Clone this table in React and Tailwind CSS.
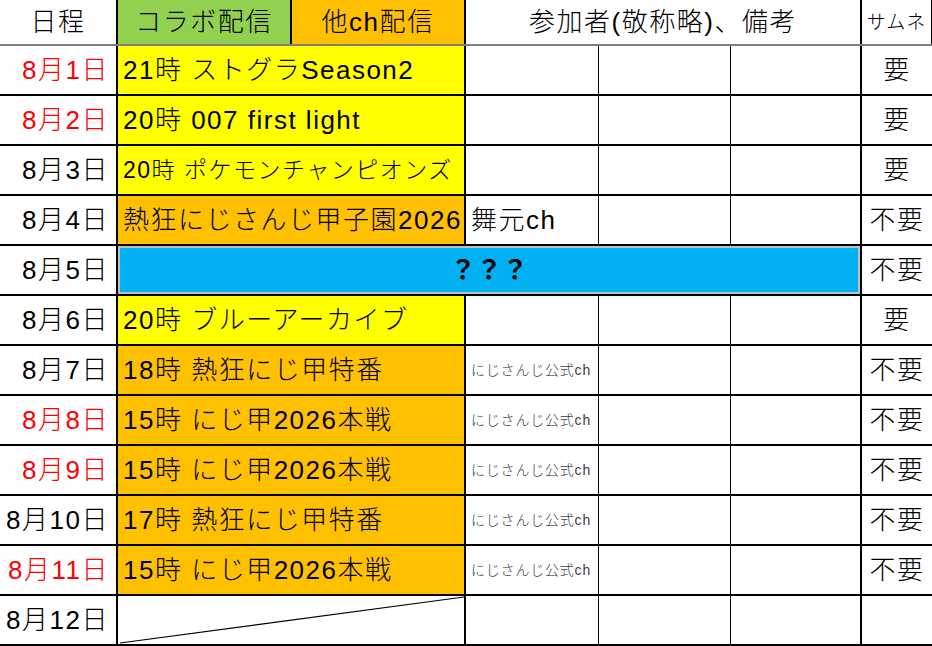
const rows = [
  { date: "8月1日", red: true, title: "21時 ストグラSeason2", bg: "bg-[#ffff00]", note: "", thumb: "要" },
  { date: "8月2日", red: true, title: "20時 007 first light", bg: "bg-[#ffff00]", note: "", thumb: "要" },
  { date: "8月3日", title: "20時 ポケモンチャンピオンズ", bg: "bg-[#ffff00]", note: "", thumb: "要", small: true },
  { date: "8月4日", title: "熱狂にじさんじ甲子園2026", bg: "bg-[#ffc000]", note: "舞元ch", thumb: "不要" },
  { date: "8月5日", unknown: true, thumb: "不要" },
  { date: "8月6日", title: "20時 ブルーアーカイブ", bg: "bg-[#ffff00]", note: "", thumb: "要" },
  { date: "8月7日", title: "18時 熱狂にじ甲特番", bg: "bg-[#ffc000]", note: "にじさんじ公式ch", tiny: true, thumb: "不要" },
  { date: "8月8日", red: true, title: "15時 にじ甲2026本戦", bg: "bg-[#ffc000]", note: "にじさんじ公式ch", tiny: true, thumb: "不要" },
  { date: "8月9日", red: true, title: "15時 にじ甲2026本戦", bg: "bg-[#ffc000]", note: "にじさんじ公式ch", tiny: true, thumb: "不要" },
  { date: "8月10日", title: "17時 熱狂にじ甲特番", bg: "bg-[#ffc000]", note: "にじさんじ公式ch", tiny: true, thumb: "不要" },
  { date: "8月11日", red: true, title: "15時 にじ甲2026本戦", bg: "bg-[#ffc000]", note: "にじさんじ公式ch", tiny: true, thumb: "不要" },
  { date: "8月12日", empty: true, thumb: "" },
];

const font = { fontFamily: '"Liberation Sans", "Noto Sans CJK JP", sans-serif' };

export default function App() {
  return (
    <div className="w-[932px] h-[646px] bg-white overflow-hidden text-black font-light" style={font}>
      <table className="table-fixed border-collapse w-[932px]">
        <colgroup>
          <col className="w-[117px]" />
          <col className="w-[174px]" />
          <col className="w-[174px]" />
          <col className="w-[133px]" />
          <col className="w-[132px]" />
          <col className="w-[131px]" />
          <col className="w-[71px]" />
        </colgroup>
        <thead>
          <tr className="h-[45px]">
            <th className="border-2 border-black border-b-[#7f7f7f] border-l-0 border-t-0 font-light text-[26px] tracking-[1.5px] leading-none">日程</th>
            <th className="border-2 border-black border-b-[#7f7f7f] border-t-0 bg-[#92d050] font-light text-[26px] tracking-[1.5px] leading-none">コラボ配信</th>
            <th className="border-2 border-black border-b-[#7f7f7f] border-t-0 bg-[#ffc000] font-light text-[26px] tracking-[1.5px] leading-none">他ch配信</th>
            <th colSpan={3} className="border-2 border-black border-b-[#7f7f7f] border-t-0 font-light text-[26px] tracking-[1.5px] leading-none">参加者(敬称略)、備考</th>
            <th className="border-2 border-black border-b-[#7f7f7f] border-t-0 font-light text-[19px] tracking-[1px] leading-none whitespace-nowrap">サムネ</th>
          </tr>
        </thead>
        <tbody>
          {rows.map((r) => (
            <tr key={r.date} className="h-[50px]">
              <td className={`border-2 border-black border-l-0 text-right pr-[7px] text-[26px] tracking-[1.5px] leading-none whitespace-nowrap ${r.red ? "text-[#ff0000]" : ""}`}>
                {r.date}
              </td>
              {r.unknown ? (
                <td colSpan={5} className="border-2 border-black bg-[#00b0f0] shadow-[inset_0_0_0_2px_#bfbfbf] text-center font-bold text-[26px] leading-none">
                  ？？？
                </td>
              ) : (
                <>
                  {r.empty ? (
                    <td colSpan={2} className="border-2 border-black relative p-0">
                      <svg className="absolute inset-0 w-full h-full" viewBox="0 0 348 50" preserveAspectRatio="none">
                        <line x1="2" y1="49" x2="348" y2="1" stroke="black" strokeWidth="1.2" />
                      </svg>
                    </td>
                  ) : (
                    <td colSpan={2} className={`border-2 border-black ${r.bg} pl-[5px] whitespace-nowrap leading-none tracking-[1.5px] ${r.small ? "text-[23px]" : "text-[26px]"}`}>
                      {r.title}
                    </td>
                  )}
                  <td className={`border-2 border-r border-black pl-[5px] whitespace-nowrap leading-none ${r.tiny ? "text-[14px] tracking-[0.8px] text-[#404040]" : "text-[26px] tracking-[1.5px]"}`}>
                    {r.note}
                  </td>
                  <td className="border-y-2 border-x border-black"></td>
                  <td className="border-2 border-l border-black"></td>
                </>
              )}
              <td className="border-2 border-black border-r-0 text-center text-[26px] tracking-[1.5px] leading-none whitespace-nowrap">{r.thumb}</td>
            </tr>
          ))}
        </tbody>
      </table>
    </div>
  );
}
